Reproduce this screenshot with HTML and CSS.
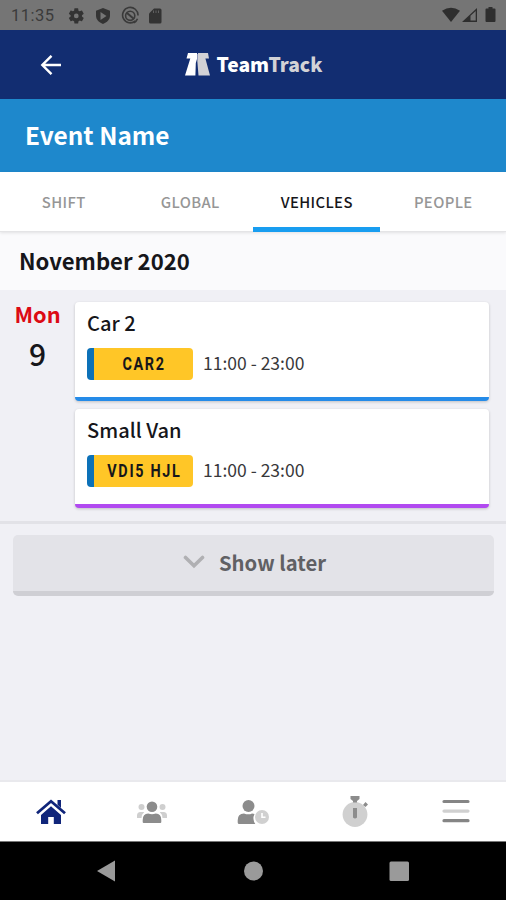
FILE: index.html
```html
<!DOCTYPE html>
<html lang="en">
<head>
<meta charset="utf-8">
<title>TeamTrack</title>
<link rel="stylesheet" href="styles.css">
</head>
<body>
<div class="app">
  <div class="status">
    <span class="clock">11:35</span>
    <svg class="status-left" width="100" height="20" viewBox="0 0 100 20">
      <g fill="#333">
        <path transform="translate(-1.2,.4) scale(.79)" d="M19.14 12.94c.04-.3.06-.61.06-.94s-.02-.64-.07-.94l2.03-1.58a.49.49 0 0 0 .12-.61l-1.92-3.32a.49.49 0 0 0-.59-.22l-2.39.96a7 7 0 0 0-1.62-.94l-.36-2.54a.48.48 0 0 0-.48-.41h-3.84a.48.48 0 0 0-.47.41l-.36 2.54c-.59.24-1.13.57-1.62.94l-2.39-.96a.48.48 0 0 0-.59.22L2.74 8.87a.48.48 0 0 0 .12.61l2.03 1.58a6 6 0 0 0 0 1.88l-2.03 1.58a.49.49 0 0 0-.12.61l1.92 3.32c.12.22.37.29.59.22l2.39-.96c.5.38 1.03.7 1.62.94l.36 2.54c.05.24.24.41.48.41h3.84c.24 0 .44-.17.47-.41l.36-2.54a7 7 0 0 0 1.62-.94l2.39.96c.22.08.47 0 .59-.22l1.92-3.32a.47.47 0 0 0-.12-.61zM12 15a3 3 0 1 1 0-6 3 3 0 0 1 0 6z"/>
        <path fill-rule="evenodd" d="M35 2l7 2.700v5.100c0 3.700-3 6.700-7 8.200-4-1.500-7-4.500-7-8.200V4.700zM32.500 6v8l6-4z"/>
        <path d="M86 2.500h6q1.500 0 1.500 1.500v12q0 1.500-1.500 1.500H82.500q-1.500 0-1.500-1.500V7.500z"/>
      </g>
      <path d="M85.500 4.500v2.500M88 4.500v2.500M90.500 4.500v2.500" stroke="#606060" stroke-width="1"/>
      <g fill="none" stroke="#3a3a3a" stroke-width="1.600">
        <path d="M67.500 14.800A7.700 7.700 0 1 1 70 9.500M66 16.700a7.700 7.700 0 0 0 3.500-4"/>
        <circle cx="62.200" cy="9.800" r="4.600"/>
        <path d="M59 7l7 6" stroke-width="2"/>
      </g>
    </svg>
    <svg class="status-right" width="56" height="18" viewBox="0 0 56 18" fill="#2e2e2e">
      <path d="M0 4.800Q9 -1.500 18 4.800L9 16z"/>
      <path fill-rule="evenodd" d="M20 16L35 2v14zM28.500 9.800V14.600H33.700V5z"/>
      <path d="M46.500 1h4v1.500h2q1 0 1 1V15q0 1-1 1h-8q-1 0-1-1V3.500q0-1 1-1h2z"/>
    </svg>
  </div>

  <header class="header">
    <svg class="back" width="22" height="20" viewBox="0 0 22 20" fill="none" stroke="#fff" stroke-width="2.400"><path d="M11.500 .8L2.300 10l9.200 9.200M2.300 10h18.700"/></svg>
    <div class="brand">
      <svg width="25" height="23" viewBox="0 0 25 23">
        <path fill="#fff" d="M3 0h9v6l-1.200 4-.4 12.500H0L5.300 5.500H1.500z"/>
        <path fill="#d2d2d6" d="M13 0h10l1 5.500h-3.600L25 22.500H13.500L12.300 8z"/>
        <path fill="#8e97b8" d="M12 1h1v6h-1z"/>
      </svg>
      <span class="brand-name">Team<span class="brand-light">Track</span></span>
    </div>
  </header>

  <h1 class="event">Event Name</h1>

  <nav class="tabs">
    <span class="tab">SHIFT</span>
    <span class="tab">GLOBAL</span>
    <span class="tab active">VEHICLES</span>
    <span class="tab">PEOPLE</span>
  </nav>

  <h2 class="month">November 2020</h2>

  <main class="content">
    <section class="day">
      <div class="date"><span class="dow">Mon</span><span class="num">9</span></div>
      <div class="cards">
        <article class="card blue">
          <div class="title">Car 2</div>
          <div class="row"><span class="plate"><span class="reg">CAR2</span></span><span class="time">11:00 - 23:00</span></div>
        </article>
        <article class="card purple">
          <div class="title">Small Van</div>
          <div class="row"><span class="plate"><span class="reg">VDI5 HJL</span></span><span class="time">11:00 - 23:00</span></div>
        </article>
      </div>
    </section>
    <button class="later">
      <svg width="22" height="14" viewBox="0 0 22 14" fill="none" stroke="#b0b0b3" stroke-width="3.600" stroke-linecap="round"><path d="M2.500 2.500L11 10.800l8.500-8.300"/></svg>
      <span>Show later</span>
    </button>
  </main>

  <nav class="bottom">
    <span><svg width="32" height="28" viewBox="0 0 32 28" fill="#10257a">
      <path d="M22.500 2H26v8l-3.500-3.300z"/>
      <path d="M2 15.200L16 3.300l14 11.900" fill="none" stroke="#10257a" stroke-width="2.800"/>
      <path d="M16 8.300L26 17v9H18.800v-7h-5.600v7H6v-9z"/>
    </svg></span>
    <span><svg width="32" height="28" viewBox="0 0 32 28">
      <g fill="#cfcfcf"><circle cx="5.500" cy="9" r="3"/><circle cx="26.500" cy="9" r="3"/><path d="M1 20v-2.500q0-3.500 3.500-3.500h3.800q-2.500 2-2.800 6zM31 20v-2.500q0-3.500-3.500-3.500h-3.800q2.500 2 2.800 6z"/></g>
      <g fill="#8c8c8c"><circle cx="16" cy="8.800" r="5.300"/><path d="M6.700 24v-2q0-6.500 5.500-6.500 3.800 1.400 7.600 0 5.500 0 5.500 6.500v2q0 1-1 1H7.700q-1 0-1-1z"/></g>
    </svg></span>
    <span><svg width="32" height="28" viewBox="0 0 32 28">
      <g fill="#8c8c8c"><circle cx="11.500" cy="8" r="6"/><path d="M.7 24.500v-2.300q0-6.700 6.300-6.700 4.500 1.700 8 0 1.500 0 2.500.5-2.500 5 .8 10H2.200q-1.500 0-1.500-1.500z"/></g>
      <circle cx="25" cy="19" r="7" fill="#d0d0d0"/><path d="M25 15v4.300h3.500" fill="none" stroke="#fff" stroke-width="1.600"/>
    </svg></span>
    <span><svg class="watch" width="30" height="34" viewBox="0 0 30 34">
      <circle cx="15" cy="20.500" r="12.400" fill="#d0d0d0"/>
      <path fill="#8c8c8c" d="M10.500 2h9v3L17 7v1.500h-4V7l-2.500-2zM13 14h4v9.500q-2 2-4 0zM23 11l2.500-3 2.500 2.500-2.500 2.500z"/>
    </svg></span>
    <span><svg class="menu" width="28" height="26" viewBox="0 0 28 26" fill="none" stroke="#858585" stroke-width="3.200" stroke-linecap="round">
      <path d="M2 3.500h24M2 22.700h24"/><path stroke="#d0d0d0" d="M2 13.100h24"/>
    </svg></span>
  </nav>

  <div class="system">
    <svg width="506" height="58" viewBox="0 0 506 58" fill="#9a9a9a">
      <path d="M97 29l18-10.500v21z"/><circle cx="253.500" cy="29" r="9.500"/><rect x="389.500" y="19.500" width="19.500" height="19.500" rx="1.500"/>
    </svg>
  </div>
</div>
</body>
</html>
```
FILE: styles.css
```css
* { box-sizing: border-box; }
body {
  margin: 0;
  font-family: "Noto Sans CJK SC", "Noto Sans", sans-serif;
  color: #16161a;
  background: #f0f0f5;
}
.app { width: 506px; height: 900px; display: flex; flex-direction: column; overflow: hidden; }
.app > * { flex: none; }

.status { height: 30px; background: #757575; display: flex; align-items: center; padding: 0 8px 0 11px; }
.clock { width: 54px; font: 400 16.5px/30px Roboto, sans-serif; letter-spacing: .5px; color: #3b3b3b; padding-top: 2px; }
.status-left { margin: 1px 0 0 3px; }
.status-right { margin-left: auto; }

.header { height: 69px; background: #122d71; display: grid; grid-template-columns: 1fr auto 1fr; align-items: center; }
.back { margin-left: 40px; }
.brand { display: flex; align-items: center; gap: 7px; padding-left: 1px; }
.brand-name { font-size: 19.3px; font-weight: 900; line-height: 24px; margin-top: -2px; color: #fff; }
.brand-light { color: #d2d2d6; }

.event { height: 73px; margin: 0; padding-left: 25px; background: #1e88cc; color: #fff; font-size: 24.4px; font-weight: 700; line-height: 72px; }

.tabs { height: 60px; background: #fff; display: grid; grid-template-columns: repeat(4, 1fr); border-bottom: 1px solid #e4e4e6; box-shadow: 0 1px 3px rgba(0, 0, 0, .1); position: relative; }
.tab { height: 60px; padding-left: 1px; text-align: center; font-size: 14.8px; font-weight: 500; line-height: 60px; letter-spacing: .4px; color: #969696; }
.tab.active { color: #16161a; border-bottom: 5px solid #189df0; }

.month { height: 58px; margin: 0; padding-left: 19px; background: #fafafc; font-size: 22.1px; font-weight: 700; line-height: 57px; }

.content { height: 490px; }
.day { display: flex; height: 234px; padding-top: 12px; border-bottom: 3px solid #e2e2e7; }
.date { width: 75px; display: flex; flex-direction: column; align-items: center; }
.dow { color: #dc0a14; font-size: 21.8px; font-weight: 700; line-height: 26px; margin-top: -1px; }
.num { font-size: 30px; font-weight: 500; line-height: 38px; margin-top: 7px; }
.cards { width: 414px; display: flex; flex-direction: column; gap: 8px; }
.card { height: 99px; padding: 7px 12px 0; background: #fff; border-radius: 4px; border-bottom: 4px solid; box-shadow: 0 1px 3px rgba(0, 0, 0, .2); }
.blue { border-color: #258be8; }
.purple { border-color: #b14af0; }
.title { font-size: 20.1px; font-weight: 500; line-height: 27px; }
.row { display: flex; align-items: center; margin-top: 12px; }
.plate { width: 106px; height: 32px; padding-left: 2px; border-left: 7px solid #0c71b8; border-radius: 4px; background: #ffc627; display: flex; align-items: center; justify-content: center; }
.reg { font: 700 18px/32px Roboto, sans-serif; letter-spacing: 2.1px; white-space: nowrap; transform: scaleX(.8); }
.time { margin: -3px 0 0 10px; font-size: 17.5px; line-height: 32px; color: #38383b; }

.later { width: 481px; height: 61px; margin: 11px 0 0 13px; padding: 0 0 2px 2px; border: 0; border-bottom: 5px solid #cfcfd4; border-radius: 5px; background: #e3e3e8; display: flex; align-items: center; justify-content: center; gap: 14px; color: #606064; font: 700 20.3px/54px "Noto Sans CJK SC", "Noto Sans", sans-serif; }

.bottom { height: 62px; background: #fff; border-top: 2px solid #e9e9ed; border-bottom: 1px solid #777; display: grid; grid-template-columns: repeat(5, 1fr); }
.bottom span { display: flex; align-items: center; justify-content: center; }
.bottom svg { display: block; }
.bottom .watch, .bottom .menu { margin: -1px 0 0 2px; }
.system { height: 58px; background: #000; }
.system svg { display: block; }
```
